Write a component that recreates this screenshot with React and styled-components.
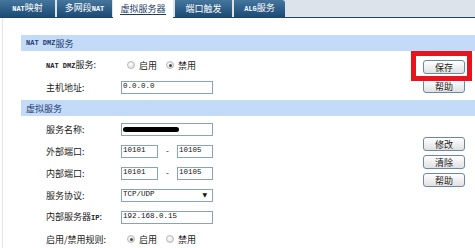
import React from "react";
import styled, { createGlobalStyle } from "styled-components";

const GlobalStyle = createGlobalStyle`
  html, body {
    margin: 0;
    padding: 0;
    background: #fff;
  }
  body {
    font-family: "Noto Sans CJK SC", "Noto Sans", sans-serif;
    font-size: 9px;
    color: #222;
  }
`;

const Page = styled.div`
  width: 475px;
  height: 248px;
  overflow: hidden;
`;

const TabBar = styled.div`
  display: flex;
  height: 17px;
  background: #dde3eb;
  border-bottom: 1px solid #1f4466;
`;

const Tab = styled.div`
  width: ${(p) => p.w}px;
  margin-right: ${(p) => p.gap}px;
  display: flex;
  align-items: center;
  justify-content: center;
  line-height: 1;
  color: ${(p) => (p.active ? "#1d3c6b" : "#fff")};
  background: ${(p) => (p.active ? "#fff" : "linear-gradient(#45769e, #1b4a74)")};
  height: ${(p) => (p.active ? "18px" : "17px")};
  border-top-right-radius: ${(p) => (p.last ? "3px" : "0")};
  z-index: 1;
`;

const TabLabel = styled.span`
  padding-bottom: 1px;
  border-bottom: ${(p) => (p.active ? "1px solid #1d3c6b" : "none")};
`;

const Lat = styled.span`
  font-family: "Liberation Mono", monospace;
  font-size: 7px;
  font-weight: bold;
`;

const Frame = styled.div`
  margin-left: 2px;
  padding: 17px 0 0 18px;
  border-left: 1px solid #e4e4e4;
  height: 230px;
`;

const Header = styled.div`
  height: 16px;
  margin-top: ${(p) => p.top || 0}px;
  background: #c4daf9;
  color: #1f3e6e;
  padding-left: 5px;
  display: flex;
  align-items: center;
  line-height: 1;
`;

const Body = styled.div`
  display: flex;
`;

const Fields = styled.div`
  flex: 1;
  padding-top: ${(p) => p.top}px;
`;

const Row = styled.div`
  height: 22px;
  display: flex;
  align-items: center;
  line-height: 1;
`;

const Label = styled.div`
  width: 75px;
  padding-left: 25px;
`;

const Field = styled.div`
  box-sizing: border-box;
  width: ${(p) => p.w}px;
  height: 13px;
  border: 1px solid #8aa3bd;
  background: #fff;
  padding: 0 1px;
  display: flex;
  align-items: center;
  justify-content: space-between;
  font-family: "Liberation Mono", monospace;
  font-size: 7.5px;
  color: #111;
`;

const Arrow = styled.span`
  font-size: 6px;
  margin-right: 4px;
  font-family: "DejaVu Sans", sans-serif;
`;

const Redacted = styled.span`
  display: block;
  width: 56px;
  height: 5px;
  margin-top: 1px;
  border-radius: 3px;
  background: #000;
`;

const Dash = styled.span`
  width: 19px;
  text-align: center;
  font-family: "Liberation Mono", monospace;
  font-size: 8px;
`;

const RadioGroup = styled.div`
  display: flex;
  align-items: center;
  padding-left: ${(p) => p.pad}px;
`;

const Radio = styled.span`
  box-sizing: border-box;
  width: 8px;
  height: 8px;
  border-radius: 50%;
  border: 1px solid #b9b9b9;
  background: radial-gradient(circle at 40% 40%, #fdfdfd, #d8d8d8);
  display: flex;
  align-items: center;
  justify-content: center;
  margin-right: 4px;

  &::after {
    content: "";
    width: 3px;
    height: 3px;
    border-radius: 50%;
    background: ${(p) => (p.checked ? "#4a4a4a" : "transparent")};
  }
`;

const RadioText = styled.span`
  margin-right: 9px;
`;

const ButtonCol = styled.div`
  width: 42px;
  margin-right: 10px;
  padding-top: ${(p) => p.top}px;
  display: flex;
  flex-direction: column;
  gap: ${(p) => p.gap}px;
`;

const Button = styled.div`
  box-sizing: border-box;
  height: 14px;
  border: 1px solid #6b88a8;
  border-radius: 3px;
  background: linear-gradient(#ffffff, #e1e1e1);
  display: flex;
  align-items: center;
  justify-content: center;
  line-height: 1;
  color: #222;
`;

const Marked = styled.div`
  position: relative;
`;

const RedMark = styled.div`
  position: absolute;
  top: -9px;
  left: -12px;
  right: -7px;
  bottom: -7px;
  border: 5px solid #e8141c;
  z-index: 2;
  pointer-events: none;
`;

const tabs = [
  { key: "nat", w: 55, gap: 2, label: <><Lat>NAT</Lat>映射</> },
  { key: "multi", w: 55, gap: 1, label: <>多网段<Lat>NAT</Lat></> },
  { key: "vs", w: 60, gap: 2, label: <>虚拟服务器</>, active: true },
  { key: "port", w: 57, gap: 2, label: <>端口触发</> },
  { key: "alg", w: 51, gap: 0, label: <><Lat>ALG</Lat>服务</>, last: true },
];

const RadioPair = ({ on }) => (
  <RadioGroup pad={6}>
    <Radio checked={on} />
    <RadioText>启用</RadioText>
    <Radio checked={!on} />
    <span>禁用</span>
  </RadioGroup>
);

const App = () => (
  <Page>
    <GlobalStyle />
    <TabBar>
      {tabs.map((t) => (
        <Tab key={t.key} w={t.w} gap={t.gap} active={t.active} last={t.last}>
          <TabLabel active={t.active}>{t.label}</TabLabel>
        </Tab>
      ))}
    </TabBar>
    <Frame>
      <Header>
        <Lat>NAT DMZ</Lat>服务
      </Header>
      <Body>
        <Fields top={3}>
          <Row>
            <Label><Lat>NAT DMZ</Lat>服务:</Label>
            <RadioPair on={false} />
          </Row>
          <Row>
            <Label>主机地址:</Label>
            <Field w={92}>0.0.0.0</Field>
          </Row>
        </Fields>
        <ButtonCol top={9} gap={5}>
          <Marked>
            <Button>保存</Button>
            <RedMark />
          </Marked>
          <Button>帮助</Button>
        </ButtonCol>
      </Body>

      <Header top={2}>虚拟服务</Header>
      <Body>
        <Fields top={2}>
          <Row>
            <Label>服务名称:</Label>
            <Field w={92}><Redacted /></Field>
          </Row>
          <Row>
            <Label>外部端口:</Label>
            <Field w={37}>10101</Field>
            <Dash>-</Dash>
            <Field w={36}>10105</Field>
          </Row>
          <Row>
            <Label>内部端口:</Label>
            <Field w={37}>10101</Field>
            <Dash>-</Dash>
            <Field w={36}>10105</Field>
          </Row>
          <Row>
            <Label>服务协议:</Label>
            <Field w={92}>
              <span>TCP/UDP</span>
              <Arrow>▼</Arrow>
            </Field>
          </Row>
          <Row>
            <Label>内部服务器<Lat>IP</Lat>:</Label>
            <Field w={92}>192.168.0.15</Field>
          </Row>
          <Row>
            <Label>启用/禁用规则:</Label>
            <RadioPair on={true} />
          </Row>
        </Fields>
        <ButtonCol top={21} gap={4}>
          <Button>修改</Button>
          <Button>清除</Button>
          <Button>帮助</Button>
        </ButtonCol>
      </Body>
    </Frame>
  </Page>
);

export default App;
